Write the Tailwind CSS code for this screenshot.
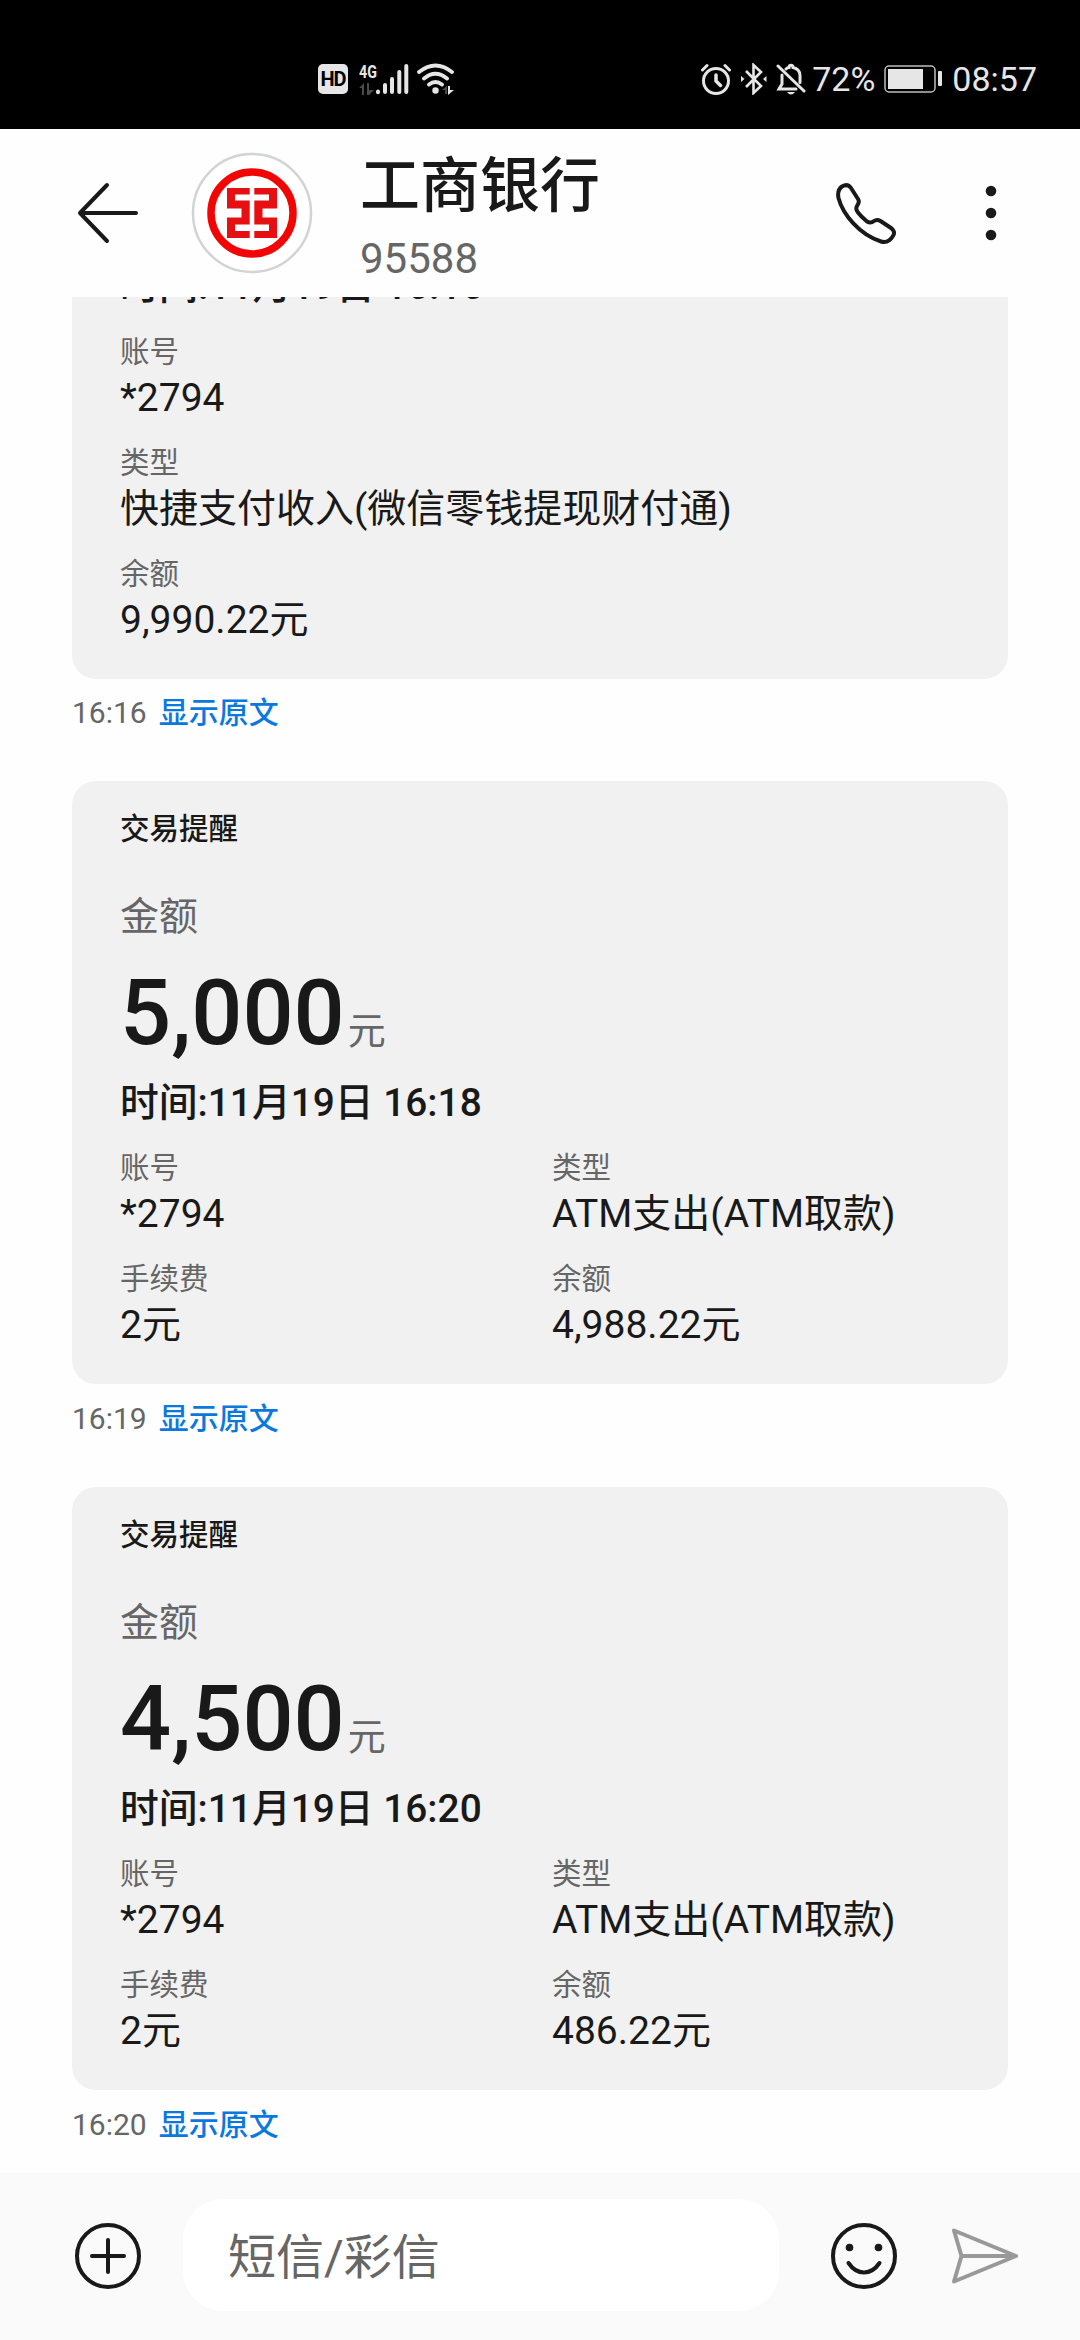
<!DOCTYPE html>
<html lang="zh-CN">

<head>
    <meta charset="UTF-8">
    <meta name="viewport" content="width=device-width, initial-scale=1.0">
    <title>工商银行</title>
    <script src="https://cdn.jsdelivr.net/npm/@tailwindcss/browser@4"></script>
</head>

<body class="bg-[#fefefe] text-[#191919] font-[Roboto,'Noto_Sans_CJK_SC',sans-serif]">
    <div class="flex flex-col w-[1080px] h-[2340px] overflow-hidden">
        <!-- Status bar -->
        <div class="h-[129px] shrink-0 bg-black text-[#e6e6e6] flex items-center justify-between pt-[29px] pl-[318px] pr-[43px]">
            <div class="flex items-center">
                <div class="w-[30px] h-[30px] rounded-[5px] bg-[#e6e6e6] text-black text-[20px] leading-[30px] font-bold text-center tracking-[-1px]">HD</div>
                <div class="ml-[11px] w-[17px] h-[32px] flex flex-col">
                    <span class="text-[19px] leading-[18px] font-bold origin-left scale-x-75">4G</span>
                    <svg class="w-[15px] h-[12px] mt-[2px] text-[#4a4a4a]" viewBox="0 0 15 12" fill="currentColor">
                        <path d="M0 5L5 0v12H3V5zM15 7l-5 5H8V0h2v7z" />
                    </svg>
                </div>
                <svg class="w-[35px] h-[32px] -ml-[2px]" viewBox="0 0 35 32" fill="none" stroke="currentColor" stroke-width="4" stroke-linecap="round">
                    <path d="M4 28.6v.6M11 22v7M18 16v13M25.300 9v20M32.300 3v26" />
                </svg>
                <svg class="w-[38px] h-[32px] ml-[8px]" viewBox="0 0 38 32" fill="none" stroke="currentColor" stroke-width="3.800" stroke-linecap="round">
                    <path d="M2 9Q18.500-4 35 9M7 15.500Q18.500 6 30 15.500M12 21.500Q18.500 16.500 25 21.500" />
                    <circle cx="18.500" cy="27.500" r="3.200" fill="currentColor" stroke="none" />
                    <path d="M25 27l5-4v8h-2v-4z" fill="#4a4a4a" stroke="none" />
                    <path d="M31 23h2v4h4l-6 5z" fill="currentColor" stroke="none" />
                </svg>
            </div>
            <div class="flex items-center">
                <svg class="w-[30px] h-[32px]" viewBox="0 0 30 32" fill="none" stroke="currentColor" stroke-width="3" stroke-linecap="round">
                    <circle cx="15" cy="18" r="12.500" />
                    <path d="M1.500 7L6 2.500M28.500 7L24 2.500" />
                    <path d="M15 12v6l4.500 4.500" stroke-width="3.500" />
                </svg>
                <svg class="w-[26px] h-[32px] ml-[10px]" viewBox="0 0 26 32" fill="none" stroke="currentColor" stroke-width="2.600">
                    <path d="M5 8l15 15-7.500 7V2l7.500 7L5 24" />
                    <path d="M0 13l3.500 3L0 19zM25.500 13L22 16l3.500 3z" fill="currentColor" stroke="none" />
                </svg>
                <svg class="w-[30px] h-[32px] ml-[9px]" viewBox="0 0 30 32" fill="none" stroke="currentColor" stroke-width="3" stroke-linecap="round">
                    <path d="M2 3l26 25M20 26H3l3-5V12M10 6c1-1 2-1.500 3-1.500C13 1.500 17 1.500 17 4.500c4.500 1 7 4 7 8v7" />
                    <path d="M11 29h8q-4 5-8 0z" fill="currentColor" stroke="none" />
                </svg>
                <span class="ml-[6px] text-[34px] leading-[40px]">72%</span>
                <svg class="w-[60px] h-[30px] ml-[8px]" viewBox="0 0 60 30">
                    <rect x="2" y="2" width="50" height="26" rx="4" fill="none" stroke="#bdbdbd" stroke-width="1.500" />
                    <rect x="5" y="5" width="35" height="20" fill="currentColor" />
                    <rect x="55" y="7" width="4" height="15" rx="1" fill="currentColor" />
                </svg>
                <span class="ml-[9px] text-[34px] leading-[40px]">08:57</span>
            </div>
        </div>

        <!-- Contact header -->
        <header class="h-[168px] shrink-0 flex items-center pl-[76px] pr-[83px]">
            <svg class="w-[64px] h-[64px]" viewBox="0 0 64 64" fill="none" stroke="currentColor" stroke-width="4" stroke-linecap="round" stroke-linejoin="round">
                <path d="M31 4L4 32l27 28M4 32h56" />
            </svg>
            <svg class="w-[122px] h-[122px] ml-[51px]" viewBox="-61 -61 122 122" fill="none">
                <circle r="59" fill="#fff" stroke="#d2d3d5" stroke-width="2.500" />
                <circle r="41" stroke="#f20505" stroke-width="7.500" />
                <path fill="#e60f12" d="M-25-25H-2.300V-18.500H-17V-12.500H-2.300V11.500H-17V18H-2.300V25H-25V4.500H-10.500V-4.500H-25z" />
                <path fill="#e60f12" d="M25-25H2.300V-18.500H17V-12.500H2.300V11.500H17V18H2.300V25H25V4.500H10.500V-4.500H25z" />
            </svg>
            <div class="ml-[47px] flex-1 flex flex-col pt-[10px]">
                <h1 class="text-[60px] leading-[70px] font-medium">工商银行</h1>
                <span class="text-[42px] leading-[50px] mt-[12px] text-[#666]">95588</span>
            </div>
            <svg class="w-[64px] h-[64px]" viewBox="0 0 64 64" fill="none" stroke="currentColor" stroke-width="4" stroke-linejoin="round">
                <path d="M8 5.500C12 3 15 4 17 7l7 11c2 3 .5 5-1 7-1.500 2.500-1 4 1 6.500 3 4 6 6.500 9 9 2.500 1.500 4.500 1.500 7-.5 2-1.500 4-1.500 6.500 0L57 47c3 2 4 5 2 8-3 5-7 7-12 5.500C26 54 9 34 4.500 17 3.500 12 4.500 8 8 5.500z" />
            </svg>
            <svg class="w-[12px] h-[56px] ml-[87px]" viewBox="0 0 12 56" fill="currentColor">
                <circle cx="6" cy="6" r="5.300" />
                <circle cx="6" cy="28" r="5.300" />
                <circle cx="6" cy="50" r="5.300" />
            </svg>
        </header>

        <!-- Messages -->
        <main class="h-[1876px] shrink-0 overflow-hidden px-[72px]">
            <section class="rounded-b-[24px] bg-[#f1f1f1] px-[48px] pb-[34px] overflow-hidden text-[39px] leading-[50px]">
                <p class="-mt-[36px] font-medium">时间:11月19日 16:16</p>
                <p class="mt-[20px] text-[29.500px] leading-[42px] text-[#666]">账号</p>
                <p>*2794</p>
                <p class="mt-[19px] text-[29.500px] leading-[42px] text-[#666]">类型</p>
                <p>快捷支付收入(微信零钱提现财付通)</p>
                <p class="mt-[19px] text-[29.500px] leading-[42px] text-[#666]">余额</p>
                <p>9,990.22元</p>
            </section>
            <div class="mt-[14px] flex items-center gap-[12px] text-[30px] leading-[40px]">
                <span class="text-[#666]">16:16</span>
                <a class="font-medium text-[#0b78de]">显示原文</a>
            </div>

            <section class="mt-[48px] h-[603px] rounded-[24px] bg-[#f1f1f1] px-[48px] pt-[28px] text-[39px] leading-[50px]">
                <h2 class="text-[29.500px] leading-[40px] font-medium">交易提醒</h2>
                <p class="mt-[43px] text-[#666]">金额</p>
                <p class="mt-[27px] h-[87px] flex items-baseline leading-[90px]"><span class="text-[90px] font-medium">5,000</span><span class="ml-[3px] text-[38px] text-[#666]">元</span></p>
                <p class="mt-[22px] text-[38.800px] font-medium">时间:11月19日 16:18</p>
                <div class="mt-[19px] grid grid-cols-[432px_1fr] gap-y-[19px]">
                    <div>
                        <p class="text-[29.500px] leading-[42px] text-[#666]">账号</p>
                        <p>*2794</p>
                    </div>
                    <div>
                        <p class="text-[29.500px] leading-[42px] text-[#666]">类型</p>
                        <p>ATM支出(ATM取款)</p>
                    </div>
                    <div>
                        <p class="text-[29.500px] leading-[42px] text-[#666]">手续费</p>
                        <p>2元</p>
                    </div>
                    <div>
                        <p class="text-[29.500px] leading-[42px] text-[#666]">余额</p>
                        <p>4,988.22元</p>
                    </div>
                </div>
            </section>
            <div class="mt-[15px] flex items-center gap-[12px] text-[30px] leading-[40px]">
                <span class="text-[#666]">16:19</span>
                <a class="font-medium text-[#0b78de]">显示原文</a>
            </div>

            <section class="mt-[48px] h-[603px] rounded-[24px] bg-[#f1f1f1] px-[48px] pt-[28px] text-[39px] leading-[50px]">
                <h2 class="text-[29.500px] leading-[40px] font-medium">交易提醒</h2>
                <p class="mt-[43px] text-[#666]">金额</p>
                <p class="mt-[27px] h-[87px] flex items-baseline leading-[90px]"><span class="text-[90px] font-medium">4,500</span><span class="ml-[3px] text-[38px] text-[#666]">元</span></p>
                <p class="mt-[22px] text-[38.800px] font-medium">时间:11月19日 16:20</p>
                <div class="mt-[19px] grid grid-cols-[432px_1fr] gap-y-[19px]">
                    <div>
                        <p class="text-[29.500px] leading-[42px] text-[#666]">账号</p>
                        <p>*2794</p>
                    </div>
                    <div>
                        <p class="text-[29.500px] leading-[42px] text-[#666]">类型</p>
                        <p>ATM支出(ATM取款)</p>
                    </div>
                    <div>
                        <p class="text-[29.500px] leading-[42px] text-[#666]">手续费</p>
                        <p>2元</p>
                    </div>
                    <div>
                        <p class="text-[29.500px] leading-[42px] text-[#666]">余额</p>
                        <p>486.22元</p>
                    </div>
                </div>
            </section>
            <div class="mt-[15px] flex items-center gap-[12px] text-[30px] leading-[40px]">
                <span class="text-[#666]">16:20</span>
                <a class="font-medium text-[#0b78de]">显示原文</a>
            </div>
        </main>

        <!-- Composer -->
        <footer class="h-[167px] shrink-0 bg-[#fafafa] flex items-start pt-[26px] pl-[74px] pr-[60px]">
            <svg class="w-[68px] h-[68px] mt-[23px]" viewBox="-34 -34 68 68" fill="none" stroke="currentColor" stroke-width="4" stroke-linecap="round">
                <circle r="31" />
                <path d="M-16 0h32M0-16v32" />
            </svg>
            <div class="ml-[41px] w-[596px] h-[112px] rounded-[40px] bg-white pl-[45px] text-[48px] leading-[118px] text-[#666]">短信/彩信</div>
            <svg class="w-[68px] h-[68px] mt-[23px] ml-[51px]" viewBox="-34 -34 68 68" fill="none" stroke="currentColor" stroke-width="4" stroke-linecap="round">
                <circle r="31" />
                <path d="M-15.500 7Q-9 16.500 0 16.500T15.500 7" />
                <circle cx="-14.500" cy="-8.500" r="3.800" fill="currentColor" stroke="none" />
                <circle cx="14.500" cy="-8.500" r="3.800" fill="currentColor" stroke="none" />
            </svg>
            <svg class="w-[70px] h-[60px] mt-[27px] ml-[52px] text-[#999]" viewBox="0 0 70 60" fill="none" stroke="currentColor" stroke-width="4" stroke-linecap="round" stroke-linejoin="round">
                <path d="M4 4.500L66 30 4 55.500 11.500 30zM11.500 30H66" />
            </svg>
        </footer>
    </div>
</body>

</html>
